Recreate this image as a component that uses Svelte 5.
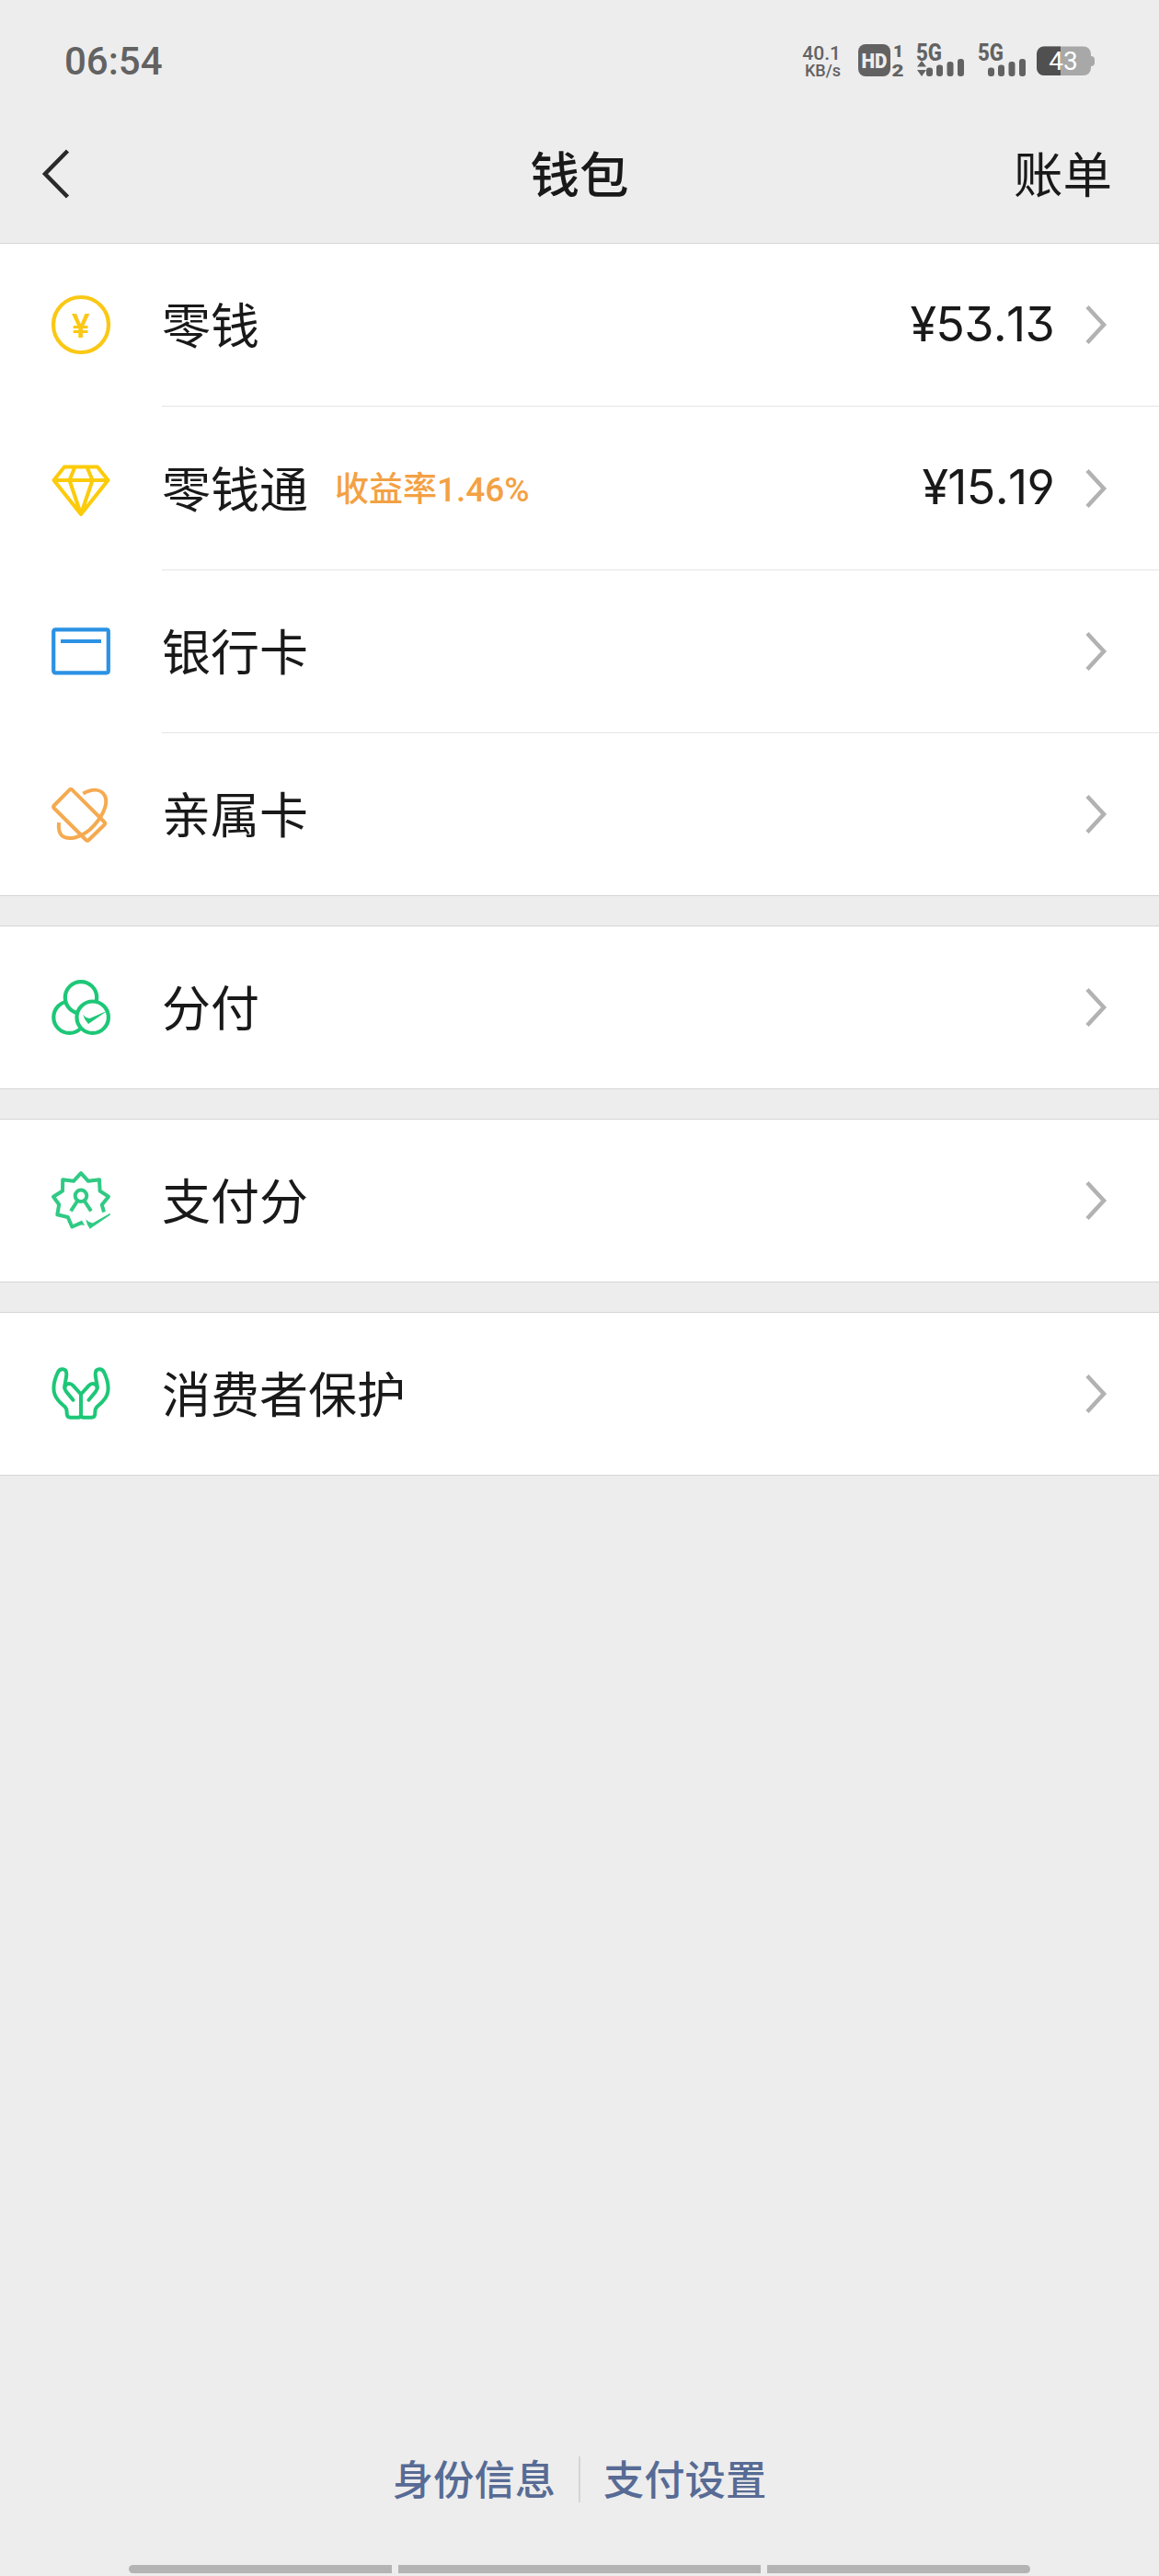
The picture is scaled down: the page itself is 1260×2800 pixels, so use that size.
<script lang="ts">
  interface WalletItem {
    icon: string;
    label: string;
    color: string;
    note?: string;
    amount?: string;
  }

  const groups: WalletItem[][] = [
    [
      { icon: 'coin', label: '零钱', color: '#fac815', amount: '¥53.13' },
      { icon: 'diamond', label: '零钱通', color: '#fccb0a', note: '收益率1.46%', amount: '¥15.19' },
      { icon: 'card', label: '银行卡', color: '#2b92e4' },
      { icon: 'family', label: '亲属卡', color: '#f5aa50' },
    ],
    [{ icon: 'circles', label: '分付', color: '#1dc777' }],
    [{ icon: 'score', label: '支付分', color: '#30ca84' }],
    [{ icon: 'hands', label: '消费者保护', color: '#1dc777' }],
  ];

  const signals = [{ arrows: true }, { arrows: false }];
</script>

<div class="screen">
  <div class="status">
    <span class="time">06:54</span>
    <div class="indicators">
      <div class="speed">
        <span class="rate">40.1</span>
        <span class="unit">KB/s</span>
      </div>
      <svg class="hd" width="50" height="36" viewBox="0 0 50 36">
        <rect x="0" y="0" width="35" height="35" rx="8" fill="#626262" />
        <text x="17.5" y="26" text-anchor="middle" textLength="28" lengthAdjust="spacingAndGlyphs" class="hd-text">HD</text>
        <text x="43.5" y="14" text-anchor="middle" class="sim">1</text>
        <text x="43" y="34.5" text-anchor="middle" textLength="13" lengthAdjust="spacingAndGlyphs" class="sim">2</text>
      </svg>
      {#each signals as s}
        <svg class="signal" width="52" height="36" viewBox="0 0 52 36">
          <text x="-1" y="17.5" textLength="28" lengthAdjust="spacingAndGlyphs" class="net">5G</text>
          {#if s.arrows}
            <path d="M0 24.5 5 18l5 6.500zM0 28h10l-5 7z" />
          {/if}
          <rect x="10" y="25.500" width="7" height="9.500" rx="3" />
          <rect x="21" y="22.500" width="7" height="12.500" rx="3" />
          <rect x="32.500" y="19" width="7" height="16" rx="3" />
          <rect x="44" y="16" width="7" height="19" rx="3" />
        </svg>
      {/each}
      <svg class="battery" width="63" height="33" viewBox="0 0 63 33">
        <rect x="53" y="11" width="10" height="11" rx="4" fill="#a8a8a8" />
        <rect x="0" y="0.500" width="59" height="31.500" rx="8" fill="#a8a8a8" />
        <path d="M26 .5H8a8 8 0 0 0-8 8V24a8 8 0 0 0 8 8h18z" fill="#505050" />
        <text x="29" y="26" text-anchor="middle" class="level">43</text>
      </svg>
    </div>
  </div>

  <header class="nav">
    <svg class="back" width="32" height="56" viewBox="0 0 32 56">
      <path d="M28.500 3 4 28l24.500 25" fill="none" stroke="#2a2a2c" stroke-width="4.500" />
    </svg>
    <h1>钱包</h1>
    <span class="bill">账单</span>
  </header>

  <main>
    {#each groups as group}
      <section class="group">
        {#each group as item (item.label)}
          <div class="row">
            <svg class="icon" width="64" height="64" viewBox="0 0 64 64" fill="none" stroke={item.color} stroke-width="4.2" stroke-linejoin="round">
              {#if item.icon === 'coin'}
                <circle cx="32" cy="32" r="30" />
                <text x="32" y="46" text-anchor="middle" class="yen">¥</text>
              {:else if item.icon === 'diamond'}
                <path d="M14 9.500h36L61.500 24 32 61 2.500 24zM2.500 24h59M25.500 9.500 19.500 24 32 61 44.500 24l-6-14.500" stroke-width="4" />
              {:else if item.icon === 'card'}
                <rect x="2.200" y="8.300" width="59.600" height="47" rx="2" />
                <path d="M10 21h44" />
              {:else if item.icon === 'family'}
                <path d="M19.500 5.600q1.500-1.400 3 0L57.500 40.500q1.500 1.400 0 3L40.500 60q-1.500 1.400-3 0L2.800 25.500q-1.500-1.500 0-3z" stroke-width="4" />
                <path d="M34.300 9.500C45 4 54 4.500 58 12c5 10-5 26-16 36.500C31 58 18 60.500 11.500 55.500 8 52.500 7.300 48 8 41" stroke-width="4" />
              {:else if item.icon === 'circles'}
                <circle cx="19.500" cy="42.700" r="17.200" />
                <circle cx="32" cy="21.300" r="17.200" fill="#fff" />
                <circle cx="44.700" cy="42.700" r="17.200" fill="#fff" />
                <path d="M34 39.500q3 4 7.500 4.500L61 35.500 40 50q-4-4-6-10.500z" fill={item.color} stroke="none" />
              {:else if item.icon === 'score'}
                <path d="M57 44.500 54.800 36.500 62 27.700 52.600 21.500 52 9.200 40 10.800 32 2.200 24 10.800 12.200 9.200 12 21.500 2 27.700 8.200 36.200 6.300 47.300 17.800 50 22.300 60.500 33.500 55.600" stroke-width="4" />
                <path d="M33 53.500 36 59l-5-1z" fill={item.color} stroke="none" />
                <circle cx="32" cy="26.800" r="6.300" stroke-width="4" />
                <path d="M27.800 33 21 43.300M36.200 33l6.800 10.300" stroke-width="4" />
                <path d="M37.300 52.200q3 3.600 7.500 4.300L63.200 46q1.600 0 .4 1.800L41.700 62.800q-3.200-4-4.400-10.600z" fill={item.color} stroke="none" />
              {:else}
                <!-- left hand, mirrored for the right one -->
                {#each ['', 'matrix(-1 0 0 1 64 0)'] as flip}
                  <g transform={flip || undefined} stroke-width="4" stroke-linecap="round">
                    <path d="M32 54.700V32.500L23.500 23.200C20 19.500 14.500 21 14.300 25.500q0 2 2 4.500l7.200 8.700" />
                    <path d="M14.300 25.500c0-6.500 2-9.500 2-15C16.300 4 9 3.500 6.500 9.500 3 17 1.800 24 2.800 30c1.700 9 8.200 12.500 11.700 16 3 3 1.800 5 2.300 8.500q.5 3.200 3.500 3.200H29q3 0 3-3" />
                  </g>
                {/each}
              {/if}
            </svg>
            <div class="body">
              <span class="label">{item.label}</span>
              {#if item.note}
                <span class="note">{item.note}</span>
              {/if}
              {#if item.amount}
                <span class="amount">{item.amount}</span>
              {/if}
              <svg class="chevron" width="24" height="44" viewBox="0 0 24 44">
                <path d="M2 2.500 20 22 2 41.500" fill="none" stroke="#b2b2b2" stroke-width="4.500" />
              </svg>
            </div>
          </div>
        {/each}
      </section>
    {/each}
  </main>

  <footer>
    <div class="links">
      <span>身份信息</span>
      <i></i>
      <span>支付设置</span>
    </div>
    <div class="gesture">
      <b></b>
      <b class="wide"></b>
      <b></b>
    </div>
  </footer>
</div>

<style>
  :global(body) {
    margin: 0;
    background: #ededed;
  }
  .screen {
    display: flex;
    flex-direction: column;
    width: 1260px;
    height: 2800px;
    box-sizing: border-box;
    overflow: hidden;
    background: #ededed;
    color: #191919;
    font-family: "Noto Sans CJK SC", sans-serif;
  }

  .status {
    display: flex;
    align-items: center;
    justify-content: space-between;
    height: 132px;
    padding: 0 70px;
    box-sizing: border-box;
    color: #626262;
    font-family: Roboto, sans-serif;
  }
  .time {
    font-size: 42px;
    font-weight: 500;
  }
  .indicators { display: flex; align-items: center; }
  .indicators svg { overflow: visible; }
  .speed {
    display: flex;
    flex-direction: column;
    align-items: flex-end;
    margin: 2px 19px 0 0;
    font-weight: 500;
  }
  .rate { font-size: 21px; line-height: 19px; }
  .unit { font-size: 18px; line-height: 17px; }
  .hd { margin-right: 14px; }
  .hd-text {
    fill: #ededed;
    font-size: 22px;
    font-weight: 900;
  }
  .sim { fill: #626262; font-size: 19px; font-weight: 900; }
  .signal { margin-right: 15px; fill: #626262; }
  .signal + .battery { margin-left: -4px; }
  .net { font-size: 25px; font-weight: 800; }
  .level { fill: #fff; font-size: 28px; }

  .nav {
    display: grid;
    grid-template-columns: 1fr auto 1fr;
    align-items: center;
    height: 132px;
    padding: 0 51px 18px;
    box-sizing: border-box;
    font-size: 53.500px;
    line-height: 76px;
  }
  .back { margin-left: -6px; }
  h1 {
    margin: 0;
    padding-bottom: 4px;
    font-size: 53.500px;
    font-weight: 500;
  }
  .bill {
    justify-self: end;
    padding-bottom: 4px;
  }

  .group {
    border-top: 1px solid #d5d5d5;
    border-bottom: 1px solid #d5d5d5;
    background: #fff;
  }
  .group + .group { margin-top: 32px; }
  .row {
    display: flex;
    align-items: center;
    padding-left: 56px;
  }
  .icon {
    flex: none;
    margin-right: 56px;
    overflow: visible;
  }
  .yen {
    fill: #fac815;
    stroke: none;
    font: 600 36px Inter, sans-serif;
  }
  .body {
    display: flex;
    flex: 1;
    align-items: center;
    height: 176px;
    padding-right: 56px;
  }
  .row + .row .body { border-top: 1px solid #e5e5e5; }
  .row:nth-child(2) .body { height: 177px; }
  .label {
    padding-bottom: 4px;
    font-size: 53px;
    line-height: 76px;
  }
  .note {
    margin-left: 29px;
    padding-bottom: 3px;
    color: #f3a144;
    font-family: Roboto, "Noto Sans CJK SC", sans-serif;
    font-size: 37px;
    font-weight: 500;
  }
  .amount {
    margin-left: auto;
    padding-bottom: 2px;
    font-family: Inter, sans-serif;
    font-size: 52px;
    font-feature-settings: "cv09", "cv04";
    font-kerning: none;
    letter-spacing: -0.700px;
  }
  .chevron { margin-left: auto; }
  .amount + .chevron { margin-left: 34px; }

  footer {
    display: flex;
    flex-direction: column;
    align-items: center;
    margin-top: auto;
  }
  .links {
    display: flex;
    align-items: center;
    gap: 25px;
    margin-bottom: 60px;
    color: #576b95;
    font-size: 44.300px;
    font-weight: 500;
    line-height: 64px;
  }
  .links span { padding-bottom: 3px; }
  .links i {
    width: 2px;
    height: 50px;
    background: #d5d5d5;
  }
  .gesture {
    display: flex;
    gap: 7px;
    margin-bottom: 3px;
  }
  .gesture b {
    width: 286px;
    height: 9px;
    border-radius: 5px 0 0 5px;
    background: #b4b4b4;
  }
  .gesture .wide {
    width: 394px;
    border-radius: 0;
  }
  .gesture .wide + b { border-radius: 0 5px 5px 0; }
</style>
